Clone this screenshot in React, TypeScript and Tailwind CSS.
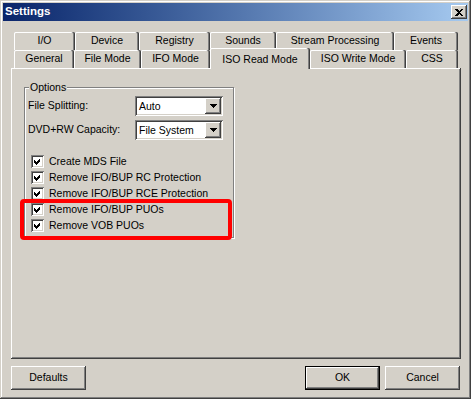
import React from "react";

const raised =
  "shadow-[inset_-1px_-1px_0_#404040,inset_1px_1px_0_#fff,inset_-2px_-2px_0_#808080,inset_2px_2px_0_#d4d0c8]";
const sunken =
  "shadow-[inset_1px_1px_0_#808080,inset_-1px_-1px_0_#fff,inset_2px_2px_0_#404040,inset_-2px_-2px_0_#d4d0c8]";
const tabEdge =
  "shadow-[inset_-1px_0_0_#404040,inset_-2px_0_0_#808080,inset_1px_0_0_#fff,inset_0_1px_0_#fff] rounded-tl-[2px] rounded-tr-[2px]";

const row1 = [
  { label: "I/O", w: "w-[61px]" },
  { label: "Device", w: "w-[64px]" },
  { label: "Registry", w: "w-[71px]" },
  { label: "Sounds", w: "w-[66px]" },
  { label: "Stream Processing", w: "w-[118px]" },
  { label: "Events", w: "w-[64px]" },
];

const row2 = [
  { label: "General", w: "w-[60px]" },
  { label: "File Mode", w: "w-[67px]" },
  { label: "IFO Mode", w: "w-[69px]" },
  { label: "ISO Read Mode", w: "w-[100px]", active: true },
  { label: "ISO Write Mode", w: "w-[96px]" },
  { label: "CSS", w: "w-[52px]" },
];

const checks = [
  "Create MDS File",
  "Remove IFO/BUP RC Protection",
  "Remove IFO/BUP RCE Protection",
  "Remove IFO/BUP PUOs",
  "Remove VOB PUOs",
];

const Combo = ({ value }: { value: string }) => (
  <div className={`w-[88px] h-[20px] bg-white ${sunken} flex items-center p-[2px]`}>
    <span className="flex-1 pl-[2px] leading-none">{value}</span>
    <div className={`w-[16px] h-[16px] bg-[#d4d0c8] ${raised} flex items-center justify-center`}>
      <svg width="7" height="4" viewBox="0 0 7 4" shapeRendering="crispEdges">
        <polygon points="0,0 7,0 3.5,4" fill="#000" />
      </svg>
    </div>
  </div>
);

const Check = ({ label }: { label: string }) => (
  <div className="h-[16px] flex items-center">
    <div className={`ml-[3px] w-[13px] h-[13px] bg-white ${sunken} flex items-center justify-center`}>
      <svg width="13" height="13" viewBox="0 0 13 13" shapeRendering="crispEdges">
        <polygon points="3,5 5,7 9,3 9,6 5,10 3,8" fill="#000" />
      </svg>
    </div>
    <span className="ml-[5px] leading-none">{label}</span>
  </div>
);

const Button = ({ label, def }: { label: string; def?: boolean }) => (
  <div
    className={`w-[75px] h-[24px] flex items-center justify-center bg-[#d4d0c8] ${
      def ? "border border-black" : ""
    } ${raised}`}
  >
    {label}
  </div>
);

const App = () => {
  return (
    <div className="w-[471px] h-[399px] p-[3px] bg-[#d4d0c8] text-[10.5px] text-black font-['Liberation_Sans',Arial,sans-serif] shadow-[inset_-1px_-1px_0_#404040,inset_1px_1px_0_#d4d0c8,inset_-2px_-2px_0_#808080,inset_2px_2px_0_#fff]">
      {/* title bar */}
      <div className="h-[18px] flex items-center justify-between pl-[2px] pr-[1px] bg-linear-to-r from-[#0a246a] to-[#a6caf0]">
        <span className="text-white font-bold text-[11.5px]">Settings</span>
        <div className={`w-[16px] h-[14px] bg-[#d4d0c8] ${raised} flex items-center justify-center`}>
          <svg width="8" height="7" viewBox="0 0 8 7" shapeRendering="crispEdges">
            <path d="M0 0h2l2 2 2-2h2L5 3.5 8 7H6L4 5 2 7H0l3-3.5z" fill="#000" />
          </svg>
        </div>
      </div>

      <div className="ml-[8px] mt-[11px]">
        {/* tabs */}
        <div className="flex pl-[3px] h-[18px]">
          {row1.map((t) => (
            <div key={t.label} className={`${t.w} h-[18px] ${tabEdge} flex items-center justify-center`}>
              {t.label}
            </div>
          ))}
        </div>
        <div className="flex items-end pl-[3px] h-[18px]">
          {row2.map((t) =>
            t.active ? (
              <div
                key={t.label}
                className={`${t.w} h-[21px] relative top-px z-10 bg-[#d4d0c8] ${tabEdge} flex justify-center pt-[4px]`}
              >
                {t.label}
              </div>
            ) : (
              <div key={t.label} className={`${t.w} h-[18px] ${tabEdge} bg-[#d4d0c8] flex items-center justify-center`}>
                {t.label}
              </div>
            )
          )}
        </div>

        {/* panel */}
        <div className="relative w-[450px] h-[291px] pt-[19px] pl-[13px] shadow-[inset_-1px_-1px_0_#404040,inset_1px_1px_0_#fff,inset_-2px_-2px_0_#808080]">
          <div className="relative w-[210px] h-[151px] border border-[#808080] shadow-[1px_1px_0_#fff,inset_1px_1px_0_#fff] pt-[8px] pl-[3px]">
            <span className="absolute -top-[7px] left-[4px] px-[1px] bg-[#d4d0c8] leading-[13px]">Options</span>
            <div className="flex items-center">
              <span className="w-[107px]">File Splitting:</span>
              <Combo value="Auto" />
            </div>
            <div className="flex items-center mt-[4px]">
              <span className="w-[107px]">DVD+RW Capacity:</span>
              <Combo value="File System" />
            </div>
            <div className="mt-[13px]">
              {checks.map((c) => (
                <Check key={c} label={c} />
              ))}
            </div>
          </div>

          {/* red highlight */}
          <div className="absolute left-[9px] top-[131px] w-[212px] h-[41px] border-4 border-[#ff0000] rounded-[4px]" />
        </div>

        {/* buttons */}
        <div className="w-[449px] flex gap-[5px] mt-[7px]">
          <Button label="Defaults" />
          <div className="ml-auto">
            <Button label="OK" def />
          </div>
          <Button label="Cancel" />
        </div>
      </div>
    </div>
  );
};

export default App;
